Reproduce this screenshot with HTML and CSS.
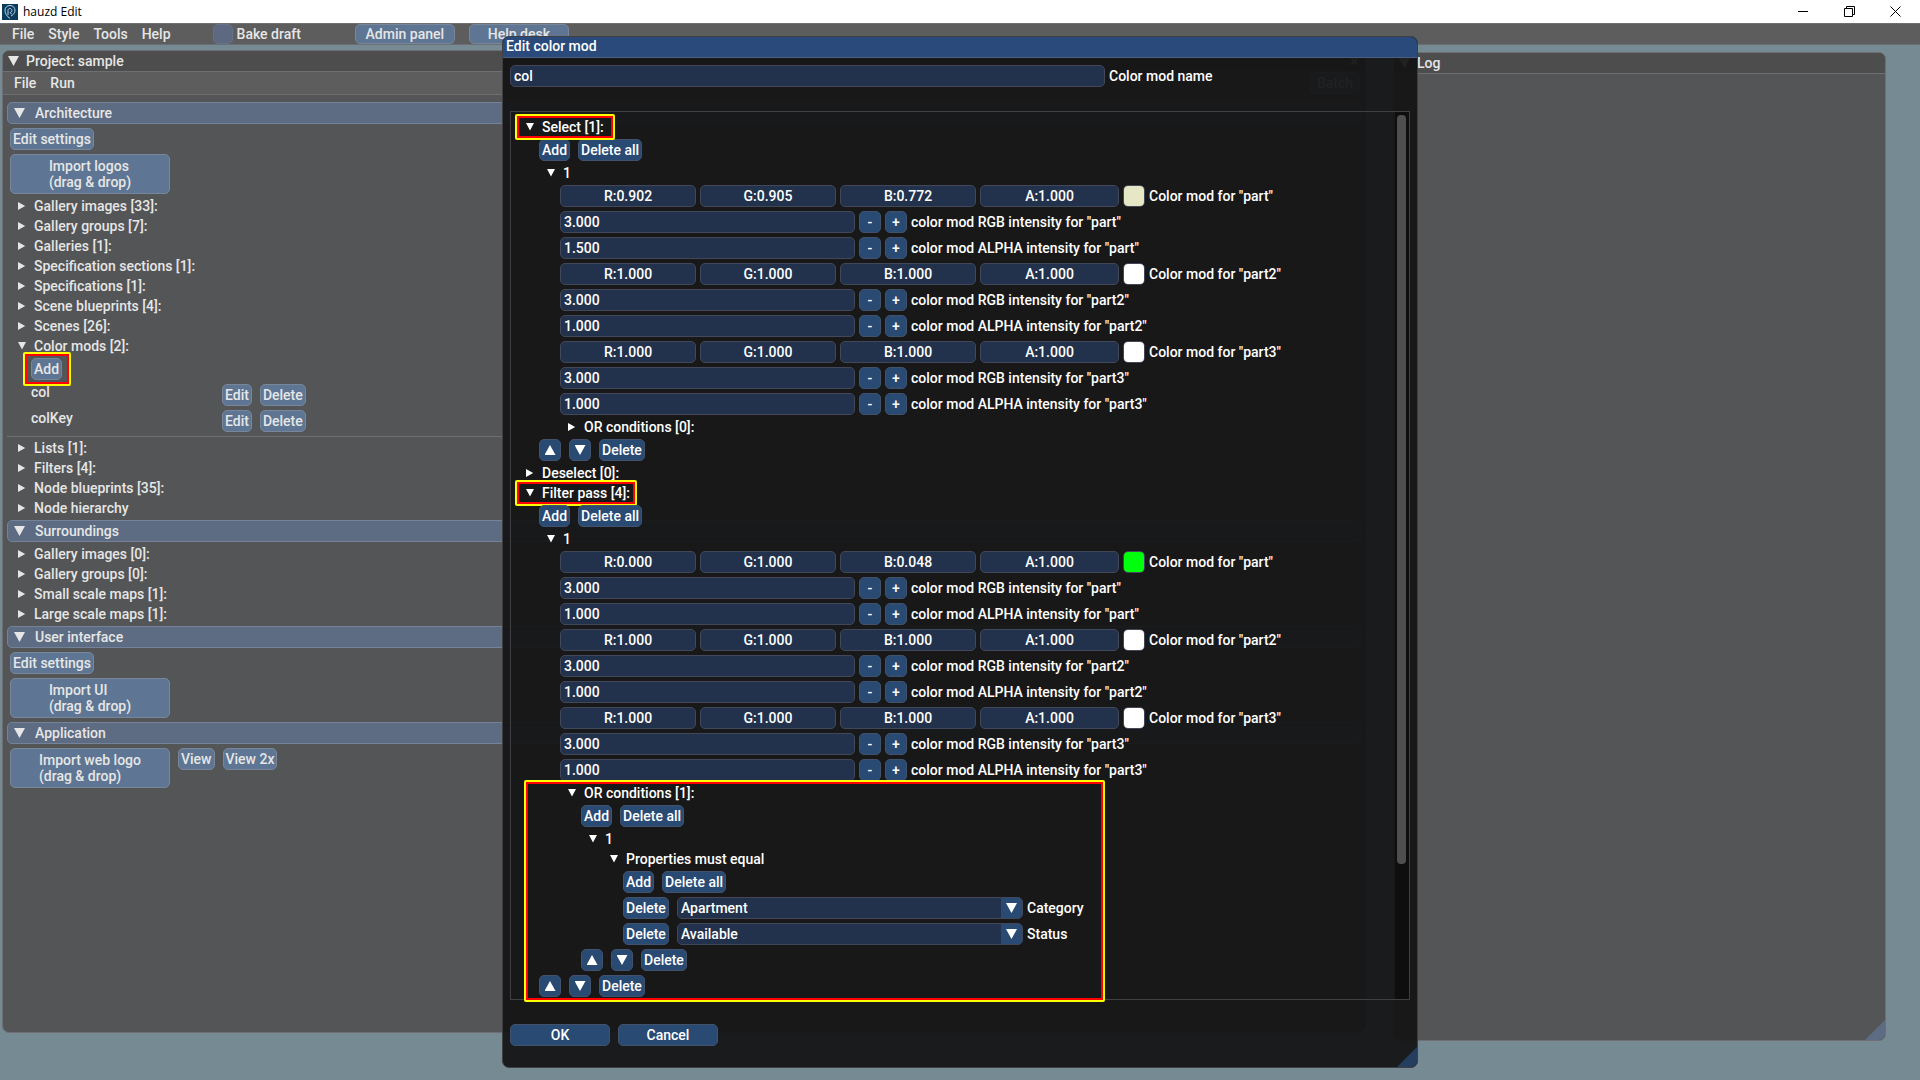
FILE: index.html
```html
<!DOCTYPE html>
<html lang="en">
<head>
    <meta charset="UTF-8">
    <meta name="viewport" content="width=device-width, initial-scale=1.0">
    <title>hauzd Edit</title>
    <link rel="stylesheet" href="styles.css">
</head>
<body>
    <header class="titlebar">
        <svg class="logo" viewBox="0 0 16 16" width="16" height="16">
            <rect width="16" height="16" fill="#0a3a5c"/>
            <path d="M8 14.500C5 12.500 3 9.500 3 6.500C3 3.500 5 1.500 8 1.500S13 3.500 13 6.500C13 9 11 11 9 12" fill="none" stroke="#b5d3e2"/>
            <path d="M6 11V6.500C6 5 7 4.500 8 4.500S10 5.500 10 6.500S9 8.500 8 8.500L10 10.500" fill="none" stroke="#b5d3e2"/>
        </svg>
        <span class="app-name">hauzd Edit</span>
        <div class="window-buttons">
            <button type="button" aria-label="Minimize"><svg width="11" height="11" viewBox="0 0 11 11"><path d="M0 5.500H10"/></svg></button>
            <button type="button" aria-label="Restore"><svg width="11" height="11" viewBox="0 0 11 11"><path d="M.5 2.500H8.500V10.500H.5ZM2.500 2.500V.5H10.500V8.500H8.500"/></svg></button>
            <button type="button" aria-label="Close"><svg width="11" height="11" viewBox="0 0 11 11"><path d="M.5.5L10.500 10.500M10.500.5L.5 10.500"/></svg></button>
        </div>
    </header>

    <nav class="menubar">
        <a href="#">File</a>
        <a href="#">Style</a>
        <a href="#">Tools</a>
        <a href="#">Help</a>
        <label class="check"><input type="checkbox"> Bake draft</label>
        <button type="button" class="menu-button">Admin panel</button>
        <button type="button" class="menu-button">Help desk</button>
    </nav>

    <main class="desktop">
        <section class="window project">
            <h2 class="window-title"><span class="tri big down"></span>Project: sample<button type="button" class="close" aria-label="Close">×</button></h2>
            <nav class="window-menu">
                <a href="#">File</a>
                <a href="#">Run</a>
                <button type="button" class="batch">Batch</button>
            </nav>
            <div class="window-body">
                <h3 class="section"><span class="tri big down"></span>Architecture</h3>
                <div class="row"><button type="button">Edit settings</button></div>
                <div class="row"><button type="button" class="import"><span>Import logos<br>(drag &amp; drop)</span></button></div>
                <details><summary>Gallery images [33]:</summary></details>
                <details><summary>Gallery groups [7]:</summary></details>
                <details><summary>Galleries [1]:</summary></details>
                <details><summary>Specification sections [1]:</summary></details>
                <details><summary>Specifications [1]:</summary></details>
                <details><summary>Scene blueprints [4]:</summary></details>
                <details><summary>Scenes [26]:</summary></details>
                <details open>
                    <summary>Color mods [2]:</summary>
                    <div class="body">
                        <div class="row"><span class="marked marked-add"><button type="button">Add</button></span></div>
                        <div class="row item"><span class="item-name">col</span><button type="button">Edit</button><button type="button">Delete</button></div>
                        <div class="row item"><span class="item-name">colKey</span><button type="button">Edit</button><button type="button">Delete</button></div>
                    </div>
                </details>
                <hr>
                <details><summary>Lists [1]:</summary></details>
                <details><summary>Filters [4]:</summary></details>
                <details><summary>Node blueprints [35]:</summary></details>
                <details><summary>Node hierarchy</summary></details>
                <h3 class="section"><span class="tri big down"></span>Surroundings</h3>
                <details><summary>Gallery images [0]:</summary></details>
                <details><summary>Gallery groups [0]:</summary></details>
                <details><summary>Small scale maps [1]:</summary></details>
                <details><summary>Large scale maps [1]:</summary></details>
                <h3 class="section"><span class="tri big down"></span>User interface</h3>
                <div class="row"><button type="button">Edit settings</button></div>
                <div class="row"><button type="button" class="import"><span>Import UI<br>(drag &amp; drop)</span></button></div>
                <h3 class="section"><span class="tri big down"></span>Application</h3>
                <div class="row">
                    <button type="button" class="import"><span>Import web logo<br>(drag &amp; drop)</span></button>
                    <button type="button">View</button>
                    <button type="button">View 2x</button>
                </div>
            </div>
        </section>

        <section class="window log">
            <h2 class="window-title"><span class="tri big down"></span>Log</h2>
            <span class="grip"></span>
        </section>

        <section class="dialog" role="dialog" aria-labelledby="dialogTitle">
            <h2 class="dialog-title" id="dialogTitle">Edit color mod</h2>
            <form class="dialog-body">
                <div class="field">
                    <input type="text" id="modName" class="widget" value="col">
                    <label for="modName" class="name-label">Color mod name</label>
                </div>

                <div class="panel">
                    <div class="panel-content">
                        <details open>
                            <summary><span class="marked marked-select">Select [1]:</span></summary>
                            <div class="body">
                                <div class="row"><button type="button">Add</button><button type="button">Delete all</button></div>
                                <details open>
                                    <summary>1</summary>
                                    <div class="body">
                                        <div class="parts" id="select"></div>
                                        <details><summary>OR conditions [0]:</summary></details>
                                    </div>
                                </details>
                                <div class="row">
                                    <button type="button" class="square" aria-label="Move up"><span class="tri big up"></span></button>
                                    <button type="button" class="square" aria-label="Move down"><span class="tri big down"></span></button>
                                    <button type="button">Delete</button>
                                </div>
                            </div>
                        </details>
                        <details><summary>Deselect [0]:</summary></details>
                        <details open>
                            <summary><span class="marked marked-filter">Filter pass [4]:</span></summary>
                            <div class="body marked marked-conditions">
                                <div class="row"><button type="button">Add</button><button type="button">Delete all</button></div>
                                <details open>
                                    <summary>1</summary>
                                    <div class="body">
                                        <div class="parts" id="filter"></div>
                                        <details open>
                                            <summary>OR conditions [1]:</summary>
                                            <div class="body">
                                                <div class="row"><button type="button">Add</button><button type="button">Delete all</button></div>
                                                <details open>
                                                    <summary>1</summary>
                                                    <div class="body">
                                                        <details open>
                                                            <summary>Properties must equal</summary>
                                                            <div class="body">
                                                                <div class="row"><button type="button">Add</button><button type="button">Delete all</button></div>
                                                                <div class="row">
                                                                    <button type="button">Delete</button>
                                                                    <div class="field property">
                                                                        <div class="combo widget">
                                                                            <select id="category"><option>Apartment</option></select>
                                                                            <span class="combo-arrow"><span class="tri big down"></span></span>
                                                                        </div>
                                                                        <label for="category">Category</label>
                                                                    </div>
                                                                </div>
                                                                <div class="row">
                                                                    <button type="button">Delete</button>
                                                                    <div class="field property">
                                                                        <div class="combo widget">
                                                                            <select id="status"><option>Available</option></select>
                                                                            <span class="combo-arrow"><span class="tri big down"></span></span>
                                                                        </div>
                                                                        <label for="status">Status</label>
                                                                    </div>
                                                                </div>
                                                            </div>
                                                        </details>
                                                    </div>
                                                </details>
                                                <div class="row">
                                                    <button type="button" class="square" aria-label="Move up"><span class="tri big up"></span></button>
                                                    <button type="button" class="square" aria-label="Move down"><span class="tri big down"></span></button>
                                                    <button type="button">Delete</button>
                                                </div>
                                            </div>
                                        </details>
                                    </div>
                                </details>
                                <div class="row">
                                    <button type="button" class="square" aria-label="Move up"><span class="tri big up"></span></button>
                                    <button type="button" class="square" aria-label="Move down"><span class="tri big down"></span></button>
                                    <button type="button">Delete</button>
                                </div>
                            </div>
                        </details>
                    </div>
                    <div class="scrollbar"><div class="thumb"></div></div>
                </div>

                <div class="row actions">
                    <button type="submit">OK</button>
                    <button type="button">Cancel</button>
                </div>
            </form>
            <span class="grip"></span>
        </section>
    </main>

    <script src="script.js"></script>
</body>
</html>
```

FILE: styles.css
```css
*, *::before, *::after {
    box-sizing: border-box;
}

body {
    margin: 0;
    min-height: 100vh;
    display: flex;
    flex-direction: column;
    background-color: #768a94;
    color: #e6e6e6;
    font: 500 14px/16px Roboto, "Liberation Sans", sans-serif;
    overflow: hidden;
}

h2, h3 {
    margin: 0;
    font: inherit;
}

a {
    color: inherit;
    text-decoration: none;
}

button, input, select {
    margin: 0;
    font: inherit;
    color: inherit;
    border: 1px solid #788699;
    border-radius: 5px;
}

button {
    height: 22px;
    padding: 0 2px;
    background-color: #5e7693;
    white-space: nowrap;
}

/* OS title bar */
.titlebar {
    height: 23px;
    display: flex;
    align-items: center;
    gap: 5px;
    padding: 0 2px;
    background-color: #fff;
    color: #000;
}

.app-name {
    font: 400 12px/16px "Open Sans", "Noto Sans", sans-serif;
}

.window-buttons {
    margin-left: auto;
    display: flex;
}

.window-buttons button {
    width: 46px;
    padding: 0;
    border: none;
    background: none;
}

.window-buttons svg {
    display: block;
    margin: auto;
    fill: none;
    stroke: #000;
}

/* main menu */
.menubar {
    height: 22px;
    display: flex;
    align-items: center;
    gap: 14px;
    padding: 0 12px;
    background-color: #5d5d5d;
    border-top: 1px solid #707074;
    border-bottom: 1px solid #6b6f75;
}

.check {
    display: flex;
    align-items: center;
    gap: 4px;
    margin: 0 40px 0 28px;
}

.check input {
    appearance: none;
    width: 20px;
    height: 20px;
    background-color: #5c6980;
    border-color: #65728a;
}

.menu-button {
    width: 100px;
    height: 20px;
}

/* floating windows */
.desktop {
    flex: 1;
}

.window {
    position: absolute;
    border: 1px solid #6e6f73;
    border-radius: 7px;
    background-color: #545556;
    overflow: hidden;
}

.project {
    left: 2px;
    top: 50px;
    width: 1364px;
    height: 983px;
}

.log {
    left: 1393px;
    top: 52px;
    width: 493px;
    height: 989px;
}

.window-title {
    height: 21px;
    display: flex;
    align-items: center;
    gap: 7px;
    padding: 0 5px;
    background-color: #4d4d4d;
    border-bottom: 1px solid #6e6f73;
}

.close {
    margin-left: auto;
    border: none;
    background: none;
}

.window-menu {
    height: 23px;
    display: flex;
    align-items: center;
    gap: 14px;
    padding: 0 5px 0 11px;
    background-color: #5d5d5d;
    border-bottom: 1px solid #6e6f73;
}

.batch {
    margin-left: auto;
    width: 50px;
}

.window-body {
    display: flex;
    flex-direction: column;
    gap: 4px;
    padding: 7px;
}

.section {
    height: 22px;
    display: flex;
    align-items: center;
    gap: 10px;
    margin: 0 -3px;
    padding: 0 6px;
    background-color: #5d6c83;
    border: 1px solid #748399;
    border-radius: 5px;
}

.row {
    display: flex;
    align-items: flex-start;
    gap: 8px;
}

.import {
    width: 160px;
    height: 40px;
}

.import span {
    display: inline-block;
    text-align: left;
}

.item-name {
    width: 183px;
}

hr {
    width: 100%;
    height: 1px;
    margin: 0 -3px -1px;
    border: none;
    background-color: #6e6f73;
}

/* tree */
summary {
    position: relative;
    height: 16px;
    padding-left: 24px;
    list-style: none;
    cursor: pointer;
}

summary::before {
    content: "";
    position: absolute;
    left: 8px;
    top: 4px;
    width: 8px;
    height: 8px;
    background-color: currentColor;
    clip-path: polygon(0 0, 90% 50%, 0 100%);
}

details[open] > summary::before {
    clip-path: polygon(0 0, 100% 0, 50% 95%);
}

.body {
    display: flex;
    flex-direction: column;
    gap: 4px;
    margin: 4px 0 0 21px;
}

.tri {
    display: block;
    width: 11px;
    height: 10px;
    flex: none;
    background-color: currentColor;
}

.down {
    clip-path: polygon(0 0, 100% 0, 50% 100%);
}

.up {
    clip-path: polygon(50% 0, 100% 100%, 0 100%);
}

/* highlight frames */
.marked {
    position: relative;
}

.marked::after {
    content: "";
    position: absolute;
    border: 2px solid #ff0;
    border-radius: 2px;
    box-shadow: inset 0 0 0 2px #f00;
    pointer-events: none;
}

.marked-add {
    display: flex;
}

.marked-add::after {
    inset: -6px -9px -6px -8px;
}

.marked-select::after {
    inset: -5px -11px -5px -27px;
}

.marked-filter::after {
    inset: -5px -7px -5px -27px;
}

.marked-conditions::after {
    left: -15px;
    bottom: -5px;
    width: 581px;
    height: 222px;
}

/* dialog */
.dialog {
    position: absolute;
    left: 502px;
    top: 36px;
    width: 916px;
    height: 1032px;
    border: 1px solid #404043;
    border-radius: 7px;
    background-color: rgba(20, 20, 20, .94);
    color: #fff;
    overflow: hidden;
}

.dialog button {
    background-color: #284a73;
    border-color: #42526c;
}

.dialog input, .dialog select {
    height: 22px;
    padding: 0 3px;
    background-color: #22324d;
    border-color: #42475a;
}

.dialog-title {
    height: 21px;
    padding: 1px 3px;
    background-color: #294a7a;
    border-bottom: 1px solid #4b5f80;
}

.dialog-body {
    display: flex;
    flex-direction: column;
    padding: 7px;
}

.field {
    display: flex;
    align-items: center;
    gap: 4px;
}

.widget {
    flex: 1;
    min-width: 0;
}

.field label {
    width: 246px;
    white-space: nowrap;
}

.field .name-label {
    width: 301px;
}

.panel {
    display: flex;
    margin: 24px 0;
    border: 1px solid #404043;
}

.panel-content {
    flex: 1;
    display: flex;
    flex-direction: column;
    gap: 4px;
    padding: 7px 0 2px 7px;
}

.scrollbar {
    width: 14px;
    padding: 3px 2px;
    background-color: #0e0e0e;
}

.thumb {
    width: 9px;
    height: 85%;
    border-radius: 4px;
    background-color: #4f4f4f;
}

.parts {
    display: flex;
    flex-direction: column;
    gap: 4px;
}

.color {
    display: grid;
    grid-template-columns: repeat(3, 136px) 1fr 22px;
    gap: 4px;
}

.color input {
    width: 100%;
    text-align: center;
}

.dialog .swatch {
    appearance: none;
    padding: 0;
    overflow: hidden;
}

.swatch::-webkit-color-swatch-wrapper {
    padding: 0;
}

.swatch::-webkit-color-swatch {
    border: none;
}

.stepper {
    display: flex;
    gap: 4px;
}

.stepper input {
    flex: 1;
    min-width: 0;
}

.field .stepper-label {
    width: 484px;
}

.stepper button, .square {
    width: 22px;
    display: flex;
    align-items: center;
    justify-content: center;
}

.property {
    flex: 1;
}

.property label {
    width: 368px;
}

.combo {
    position: relative;
}

.combo select {
    display: block;
    appearance: none;
    width: 100%;
}

.combo-arrow {
    position: absolute;
    top: 1px;
    right: 1px;
    width: 21px;
    height: 20px;
    display: flex;
    align-items: center;
    justify-content: center;
    border-radius: 0 4px 4px 0;
    background-color: #284a73;
    pointer-events: none;
}

.actions button {
    width: 100px;
}

.grip {
    position: absolute;
    right: 0;
    bottom: 0;
    width: 20px;
    height: 20px;
    background-color: #5d6c83;
    clip-path: polygon(100% 0, 100% 100%, 0 100%);
}

.dialog .grip {
    background-color: #253d5e;
}
```

FILE: script.js
```js
const white = ["1.000", "1.000", "1.000", "1.000"];

const mods = {
    select: [
        { name: "part", rgba: ["0.902", "0.905", "0.772", "1.000"], hex: "#e6e7c5", rgb: "3.000", alpha: "1.500" },
        { name: "part2", rgba: white, hex: "#ffffff", rgb: "3.000", alpha: "1.000" },
        { name: "part3", rgba: white, hex: "#ffffff", rgb: "3.000", alpha: "1.000" }
    ],
    filter: [
        { name: "part", rgba: ["0.000", "1.000", "0.048", "1.000"], hex: "#00ff0c", rgb: "3.000", alpha: "1.000" },
        { name: "part2", rgba: white, hex: "#ffffff", rgb: "3.000", alpha: "1.000" },
        { name: "part3", rgba: white, hex: "#ffffff", rgb: "3.000", alpha: "1.000" }
    ]
};

function stepper(id, value, text) {
    return `<div class="field">
        <div class="stepper widget">
            <input type="text" id="${id}" value="${value}">
            <button type="button">-</button>
            <button type="button">+</button>
        </div>
        <label for="${id}" class="stepper-label">${text}</label>
    </div>`;
}

function colorMod(group, mod) {
    const id = `${group}-${mod.name}`;
    const channels = ["R", "G", "B", "A"].map((c, i) =>
        `<input type="text" aria-label="${c}" value="${c}:${mod.rgba[i]}">`).join("");

    return `<div class="field">
        <div class="color widget">${channels}<input type="color" class="swatch" id="${id}" value="${mod.hex}"></div>
        <label for="${id}">Color mod for "${mod.name}"</label>
    </div>`
    + stepper(`${id}-rgb`, mod.rgb, `color mod RGB intensity for "${mod.name}"`)
    + stepper(`${id}-alpha`, mod.alpha, `color mod ALPHA intensity for "${mod.name}"`);
}

for (const group in mods) {
    document.getElementById(group).innerHTML = mods[group].map(mod => colorMod(group, mod)).join("");
}
```
